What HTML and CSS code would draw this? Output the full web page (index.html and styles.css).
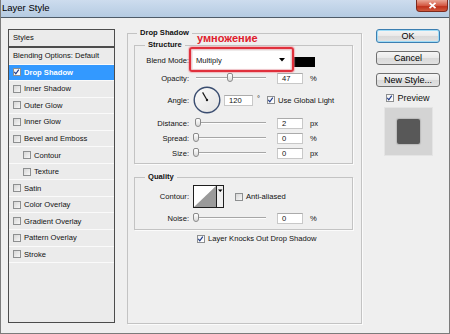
FILE: index.html
```html
<!DOCTYPE html>
<html>
<head>
    <link rel="stylesheet" href="styles.css">
</head>
<body>
    <div class="window">
        <div class="titlebar">
            <span class="title">Layer Style</span>
            <div class="close">
                <svg width="9" height="7" viewBox="0 0 9 7"><path d="M1.5 0.8 L7.5 6.2 M7.5 0.8 L1.5 6.2" stroke="#fff" stroke-width="1.8"/></svg>
            </div>
        </div>

        <div class="dialog">
            <!-- effects list -->
            <div class="styles-list">
                <div class="list-head">Styles</div>
                <div class="list-item">Blending Options: Default</div>
                <div class="list-item active"><span class="cb checked"><svg width="8" height="8" viewBox="0 0 8 8"><path d="M1.5 3.8 L3.2 6 L6.6 1.2" fill="none" stroke="#1f3a8a" stroke-width="1.3"/></svg></span>Drop Shadow</div>
                <div class="list-item"><span class="cb"></span>Inner Shadow</div>
                <div class="list-item"><span class="cb"></span>Outer Glow</div>
                <div class="list-item"><span class="cb"></span>Inner Glow</div>
                <div class="list-item"><span class="cb"></span>Bevel and Emboss</div>
                <div class="list-item sub"><span class="cb"></span>Contour</div>
                <div class="list-item sub"><span class="cb"></span>Texture</div>
                <div class="list-item"><span class="cb"></span>Satin</div>
                <div class="list-item"><span class="cb"></span>Color Overlay</div>
                <div class="list-item"><span class="cb"></span>Gradient Overlay</div>
                <div class="list-item"><span class="cb"></span>Pattern Overlay</div>
                <div class="list-item"><span class="cb"></span>Stroke</div>
            </div>

            <!-- settings -->
            <fieldset class="group main">
                <legend>Drop Shadow</legend>

                <fieldset class="group structure">
                    <legend>Structure</legend>
                    <div class="row blend-row">
                        <span class="label">Blend Mode:</span>
                        <div class="select">
                            <span>Multiply</span>
                            <svg width="6" height="4" viewBox="0 0 6 4"><path d="M0 0 H6 L3 3.5 Z" fill="#000"/></svg>
                            <div class="highlight"></div>
                            <div class="annotation">умножение</div>
                        </div>
                        <div class="swatch"></div>
                    </div>
                    <div class="row">
                        <span class="label">Opacity:</span>
                        <div class="slider"><div class="track"></div><div class="thumb" style="left: 34px"></div></div>
                        <div class="num">47</div>
                        <span class="unit">%</span>
                    </div>
                    <div class="row angle-row">
                        <span class="label">Angle:</span>
                        <svg class="dial" width="28" height="28" viewBox="0 0 28 28">
                            <defs>
                                <linearGradient id="dialFill" x1="0" y1="0" x2="1" y2="1">
                                    <stop offset="0" stop-color="#fbfbfb"/>
                                    <stop offset="1" stop-color="#e2e2e2"/>
                                </linearGradient>
                            </defs>
                            <circle cx="14" cy="14" r="12.8" fill="url(#dialFill)" stroke="#3a4d70" stroke-width="1.4"/>
                            <path d="M14 14 L9.6 6.4" stroke="#1a1a1a" stroke-width="1.2"/>
                            <circle cx="14" cy="14" r="1.2" fill="#1a1a1a"/>
                        </svg>
                        <div class="num angle">120</div>
                        <span class="deg">°</span>
                        <span class="cb checked global"><svg width="8" height="8" viewBox="0 0 8 8"><path d="M1.5 3.8 L3.2 6 L6.6 1.2" fill="none" stroke="#1f3a8a" stroke-width="1.3"/></svg></span>
                        <span class="cb-text">Use Global Light</span>
                    </div>
                    <div class="row">
                        <span class="label">Distance:</span>
                        <div class="slider"><div class="track"></div><div class="thumb" style="left: 2px"></div></div>
                        <div class="num">2</div>
                        <span class="unit">px</span>
                    </div>
                    <div class="row">
                        <span class="label">Spread:</span>
                        <div class="slider"><div class="track"></div><div class="thumb" style="left: 0px"></div></div>
                        <div class="num">0</div>
                        <span class="unit">%</span>
                    </div>
                    <div class="row">
                        <span class="label">Size:</span>
                        <div class="slider"><div class="track"></div><div class="thumb" style="left: 0px"></div></div>
                        <div class="num">0</div>
                        <span class="unit">px</span>
                    </div>
                </fieldset>

                <fieldset class="group quality">
                    <legend>Quality</legend>
                    <div class="row contour-row">
                        <span class="label">Contour:</span>
                        <svg width="31" height="23" viewBox="0 0 31 23">
                            <rect x="0.5" y="0.5" width="30" height="22" fill="#efefef" stroke="#1e1e1e"/>
                            <path d="M1 1 H23 L1 22 Z" fill="#fff"/>
                            <path d="M1 22 L23 1 V22 Z" fill="#9a9a9a"/>
                            <path d="M23.5 0.5 V22.5" stroke="#1e1e1e"/>
                            <path d="M25 4.5 H29.5 L27.25 7 Z" fill="#000"/>
                        </svg>
                        <span class="cb anti"></span>
                        <span class="cb-text">Anti-aliased</span>
                    </div>
                    <div class="row">
                        <span class="label">Noise:</span>
                        <div class="slider"><div class="track"></div><div class="thumb" style="left: 0px"></div></div>
                        <div class="num">0</div>
                        <span class="unit">%</span>
                    </div>
                </fieldset>

                <div class="knock-row">
                    <span class="cb checked"><svg width="8" height="8" viewBox="0 0 8 8"><path d="M1.5 3.8 L3.2 6 L6.6 1.2" fill="none" stroke="#1f3a8a" stroke-width="1.3"/></svg></span>
                    <span class="cb-text">Layer Knocks Out Drop Shadow</span>
                </div>
            </fieldset>

            <!-- buttons -->
            <div class="side">
                <div class="btn default">OK</div>
                <div class="btn">Cancel</div>
                <div class="btn">New Style...</div>
                <div class="preview-row">
                    <span class="cb checked"><svg width="8" height="8" viewBox="0 0 8 8"><path d="M1.5 3.8 L3.2 6 L6.6 1.2" fill="none" stroke="#1f3a8a" stroke-width="1.3"/></svg></span>
                    <span class="preview-text">Preview</span>
                </div>
                <div class="thumbnail"><div class="thumbnail-square"></div></div>
            </div>
        </div>
    </div>
</body>
</html>
```

FILE: styles.css
```css
body {
    margin: 0;
    font-family: "Liberation Sans", Arial, sans-serif;
    font-size: 7.6px;
    color: #111;
}

.window {
    width: 448px;
    height: 333px;
    border: 1px solid #7b7b7b;
    border-top: 0;
    background: #efefef;
}

/* title bar */

.titlebar {
    display: flex;
    align-items: flex-start;
    height: 17px;
    border-bottom: 1px solid #4e5b68;
    background: linear-gradient(#cddcee, #b5cbe2);
}

.title {
    padding-left: 1px;
    font-size: 9.5px;
    line-height: 16px;
    color: #000;
}

.close {
    display: flex;
    align-items: center;
    justify-content: center;
    width: 32px;
    height: 12px;
    margin-left: auto;
    margin-right: 1px;
    box-sizing: border-box;
    border: 1px solid #7d2a1e;
    border-top: 0;
    border-radius: 0 0 4px 4px;
    background: linear-gradient(#eaa796, #d45a44 50%, #c0321c 60%, #cf5a3e);
}

/* layout */

.dialog {
    display: flex;
    align-items: flex-start;
    padding: 10px 0 0 7px;
}

/* styles list */

.styles-list {
    width: 107px;
    height: 294px;
    margin-top: 1px;
    box-sizing: border-box;
    border: 1px solid #4c4c4c;
    background: #ebebeb;
}

.list-head {
    height: 16px;
    padding-left: 4px;
    line-height: 16px;
    border-bottom: 2px solid #4c4c4c;
}

.list-item {
    display: flex;
    align-items: center;
    gap: 3px;
    height: 15.55px;
    padding-left: 4px;
    border-bottom: 1px solid #fafafa;
}

.list-item.sub {
    padding-left: 14px;
}

.list-item.active {
    background: #3399ff;
    color: #fff;
    font-weight: bold;
}

/* checkboxes */

.cb {
    display: inline-flex;
    flex: none;
    width: 8px;
    height: 8px;
    box-sizing: border-box;
    border: 1px solid #8d8f90;
    background: linear-gradient(135deg, #d6d6d6, #f7f7f7);
}

.cb svg {
    margin: -1px 0 0 -1px;
}

.cb.checked {
    background: linear-gradient(135deg, #f2f2f2, #ffffff);
}

.cb-text {
    margin-left: 3px;
    white-space: nowrap;
}

/* group boxes */

.group {
    margin: 0;
    padding: 0;
    border: 1px solid #c3c3c3;
    box-shadow: 1px 1px 0 #fbfbfb;
    min-width: 0;
}

.group legend {
    padding: 0 3px;
    line-height: 10px;
    font-weight: bold;
}

.main {
    width: 235px;
    height: 296px;
    box-sizing: border-box;
    margin-left: 12px;
    padding: 2px 8px 0 6px;
}

.main > legend {
    margin-left: 3px;
}

.structure,
.quality {
    box-sizing: border-box;
}

.structure legend,
.quality legend {
    margin-left: 10px;
}

.structure {
    padding: 1px 0 4px;
}

.quality {
    margin-top: 8px;
    padding: 3px 0 5px;
}

/* setting rows */

.row {
    position: relative;
    display: flex;
    align-items: center;
    height: 12px;
    margin-top: 3px;
}

.label {
    width: 54px;
    margin-right: 4px;
    text-align: right;
    white-space: nowrap;
}

.blend-row {
    height: 18px;
    margin-top: 0;
}

.select {
    position: relative;
    display: flex;
    align-items: center;
    justify-content: space-between;
    width: 97px;
    height: 18px;
    box-sizing: border-box;
    padding: 0 5px 0 3px;
    background: #fff;
}

.highlight {
    position: absolute;
    top: -4px;
    right: -4px;
    bottom: -3px;
    left: -4px;
    border: 2px solid #e0303c;
    border-radius: 3px;
    box-shadow: 0 0 1px 1px rgba(240, 140, 150, 0.55), inset 0 0 1px 1px rgba(240, 140, 150, 0.45);
}

.annotation {
    position: absolute;
    top: -19px;
    left: 4px;
    font-size: 11px;
    line-height: 12px;
    font-weight: bold;
    color: #e0202c;
    white-space: nowrap;
}

.swatch {
    width: 22px;
    height: 10px;
    margin: 4px 0 0 3px;
    background: #000;
}

.slider {
    position: relative;
    width: 80px;
    height: 12px;
}

.track {
    position: absolute;
    top: 5px;
    left: 3px;
    right: 7px;
    height: 1px;
    border-top: 1px solid #a6a6a6;
    background: #fdfdfd;
}

.thumb {
    position: absolute;
    top: 1px;
    width: 6px;
    height: 9px;
    box-sizing: border-box;
    border: 1px solid #8a8a8a;
    border-radius: 2px 2px 3px 3px;
    background: linear-gradient(#ffffff, #d9d9d9);
}

.num {
    width: 26px;
    height: 11px;
    box-sizing: border-box;
    margin-left: 4px;
    padding-left: 4px;
    line-height: 9px;
    border: 1px solid #c8c8c8;
    border-top-color: #ababab;
    background: #fff;
}

.unit {
    margin-left: 7px;
}

.angle-row {
    height: 28px;
    margin-top: 2px;
}

.num.angle {
    width: 29px;
    margin-left: 3px;
}

.deg {
    margin: -4px 0 0 4px;
}

.cb.global {
    margin-left: 7px;
}

.contour-row {
    height: 23px;
    margin-top: 0;
}

.cb.anti {
    margin-left: 11px;
}

.quality .row + .row {
    margin-top: 4px;
}

.knock-row {
    display: flex;
    align-items: center;
    height: 9px;
    margin-top: 4px;
    padding-left: 63px;
}

/* right column */

.side {
    display: flex;
    flex-direction: column;
    align-items: center;
    width: 64px;
    margin: 1px 0 0 14px;
}

.btn {
    width: 64px;
    height: 14px;
    box-sizing: border-box;
    margin-bottom: 8px;
    border: 1px solid #707070;
    border-radius: 3px;
    background: linear-gradient(#f5f5f5, #e9e9e9 50%, #d9d9d9 51%, #e2e2e2);
    font-size: 9px;
    line-height: 12px;
    text-align: center;
    color: #000;
}

.btn.default {
    border-color: #3c7fb1;
    box-shadow: inset 0 0 0 1px #9fdcf7;
}

.preview-row {
    display: flex;
    align-items: center;
    height: 9px;
    margin-top: -2px;
}

.preview-text {
    margin-left: 3px;
    font-size: 9px;
}

.thumbnail {
    display: flex;
    align-items: center;
    justify-content: center;
    width: 49px;
    height: 49px;
    margin-top: 5px;
    box-sizing: border-box;
    border: 1px solid #e4e4e4;
    background: #d4d4d4;
}

.thumbnail-square {
    width: 23px;
    height: 25px;
    border-radius: 2px;
    background: #585858;
    box-shadow: 0 0 1px 1px rgba(0, 0, 0, 0.12);
}
```
